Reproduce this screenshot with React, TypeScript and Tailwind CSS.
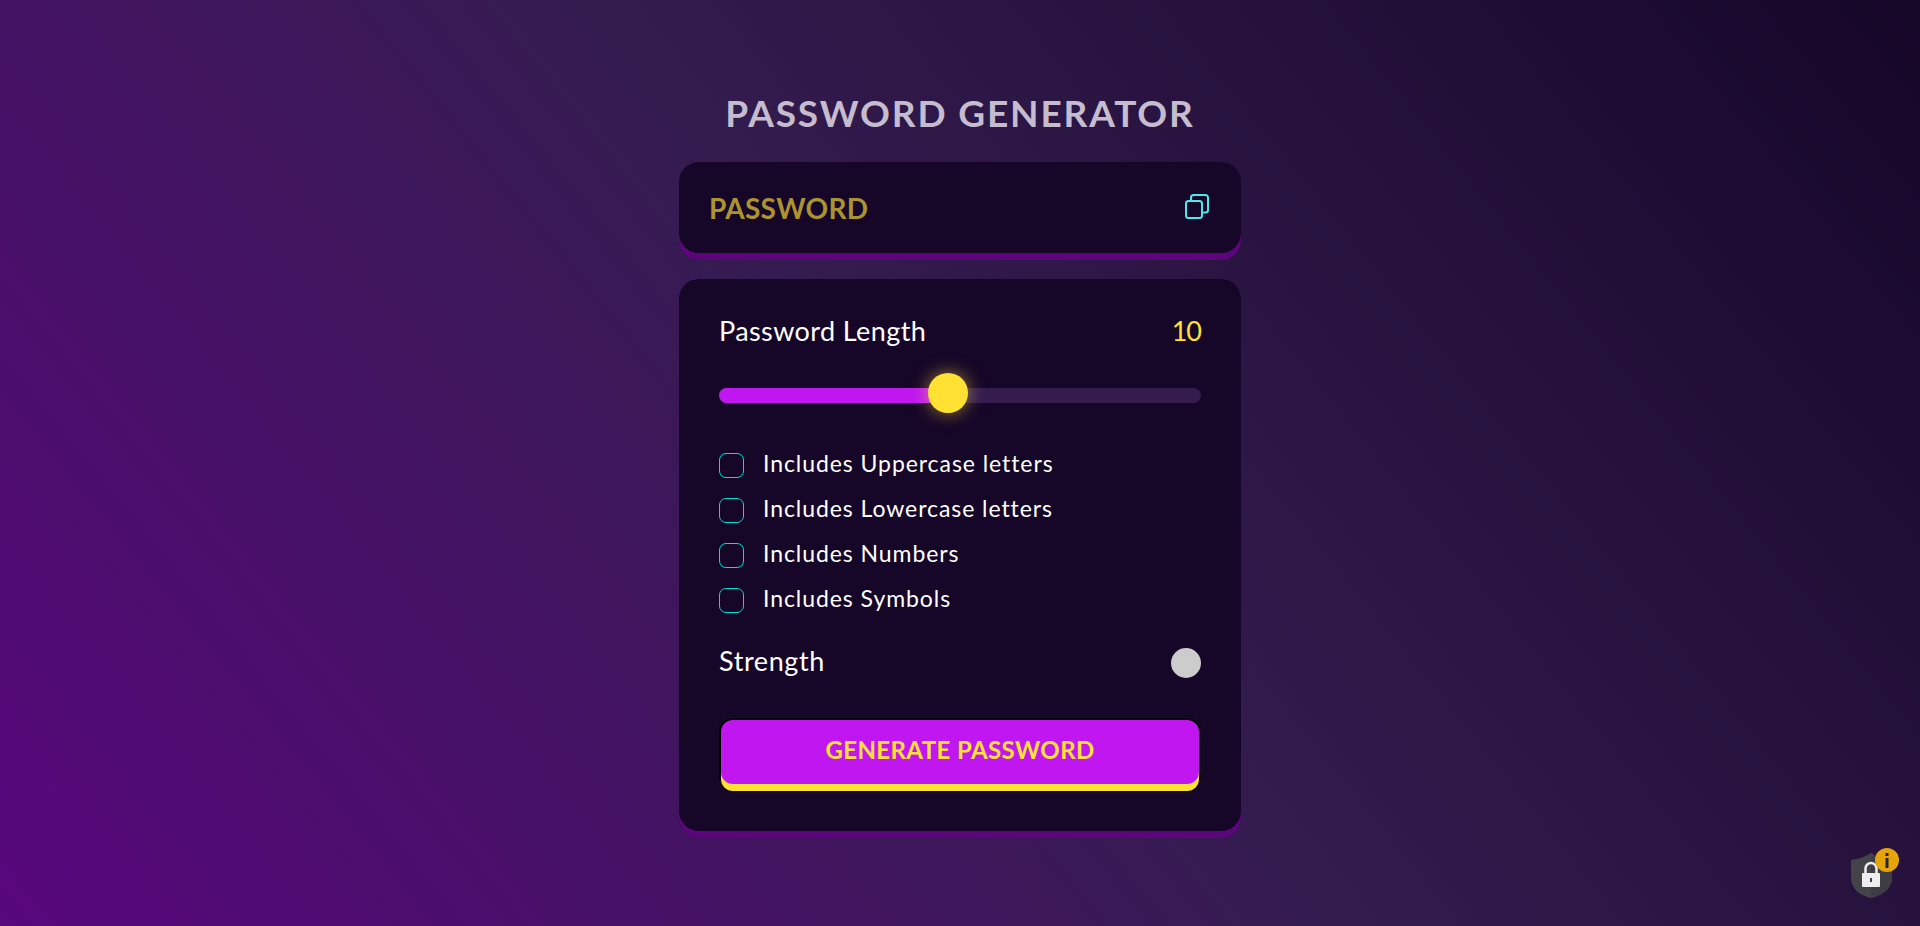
const options = [
  "Includes Uppercase letters",
  "Includes Lowercase letters",
  "Includes Numbers",
  "Includes Symbols",
];

function CopyIcon() {
  return (
    <svg width="25" height="25" viewBox="0 0 25 25" fill="none" stroke="#4fe8ea" strokeWidth="2">
      <rect x="1" y="7" width="16" height="17" rx="2.5" />
      <path d="M6 7V3.5A2.5 2.5 0 0 1 8.500 1h12A2.500 2.500 0 0 1 23 3.500V16a2.500 2.500 0 0 1-2.500 2.500H17" />
    </svg>
  );
}

function LockBadge() {
  return (
    <svg width="50" height="58" viewBox="0 0 50 58" className="absolute left-[1849px] top-[846px]">
      <path d="M22 7 C16 11 9 13 2 14 V32 C2 43 12 50 22 52 C32 50 43 43 43 32 V14 C35 13 28 11 22 7Z" fill="#45434a" />
      <path d="M22 7 C28 11 35 13 43 14 V32 C43 43 32 50 22 52Z" fill="#3e3c44" />
      <path d="M16.500 27 V22.500 a5.500 5.500 0 0 1 11 0 V27" fill="none" stroke="#eeeeee" strokeWidth="2.500" />
      <rect x="13" y="27" width="18" height="14" rx="1" fill="#eeeeee" />
      <rect x="21" y="32" width="2" height="4" fill="#45434a" />
      <circle cx="38" cy="14" r="12" fill="#e5a50a" />
      <rect x="36.500" y="12" width="3" height="10" fill="#2a2320" />
      <rect x="36.500" y="7" width="3" height="3" fill="#2a2320" />
    </svg>
  );
}

export default function App() {
  return (
    <main className="relative flex h-[926px] flex-col items-center overflow-hidden bg-[linear-gradient(231deg,#160628_0%,#341c4f_50%,#58077d_100%)] font-['Lato',sans-serif]">
      <h1 className="mt-[91px] h-[44px] text-[37px] leading-[44px] font-bold tracking-[1.85px] text-[#c6bcd0]">
        PASSWORD GENERATOR
      </h1>

      <div className="mt-[27px] flex h-[98px] w-[562px] items-start justify-between rounded-[20px] bg-[#160628] px-[30px] pt-[31px] shadow-[inset_0_-7px_0_#5c067c]">
        <span className="text-[28px] leading-[30px] font-bold tracking-[0.3px] text-[#ab932f]">
          PASSWORD
        </span>
        <span className="mt-[1px] mr-[1px]">
          <CopyIcon />
        </span>
      </div>

      <div className="mt-[19px] w-[562px] rounded-[20px] bg-[#160628] px-[40px] pt-[33px] pb-[58px] shadow-[inset_0_-7px_0_#5c067c]">
        <div className="flex h-[40px] items-center justify-between text-[27px] leading-[38px]">
          <span className="mb-[2px] tracking-[0.4px] text-white">Password Length</span>
          <span className="mb-[2px] tracking-[-1px] text-[#ffe133]">10</span>
        </div>

        <div className="relative mt-[36px] h-[15px] rounded-full bg-[#341c4f]">
          <div className="h-full w-[215px] rounded-l-full bg-[#c017f0]" />
          <div className="absolute top-[-15px] left-[209px] h-[40px] w-[40px] rounded-full bg-[#ffe133] shadow-[0_0_18px_rgba(255,225,51,0.55)]" />
        </div>

        <ul className="mt-[50px] flex flex-col gap-[20px]">
          {options.map((label) => (
            <li key={label} className="flex h-[25px] items-center gap-[19px]">
              <span className="h-[25px] w-[25px] rounded-[7px] border border-[#00e0d0]" />
              <span className="mb-[4px] text-[23px] leading-[25px] tracking-[0.93px] text-white">{label}</span>
            </li>
          ))}
        </ul>

        <div className="mt-[35px] flex h-[30px] items-center justify-between">
          <span className="mb-[4px] text-[27px] leading-[30px] tracking-[0.6px] text-white">Strength</span>
          <span className="h-[30px] w-[30px] rounded-full bg-[#cccccc]" />
        </div>

        <button className="mt-[40px] flex h-[62px] w-[482px] items-start rounded-t-[14px] border-x-2 border-t-2 border-black">
          <span className="flex h-[64px] w-full shrink-0 items-center justify-center rounded-[12px] bg-[#c017f0] pb-[5px] text-[24px] font-bold tracking-[0.4px] text-[#ffe133] shadow-[0_7px_0_#ffe133]">
            GENERATE PASSWORD
          </span>
        </button>
      </div>

      <LockBadge />
    </main>
  );
}
